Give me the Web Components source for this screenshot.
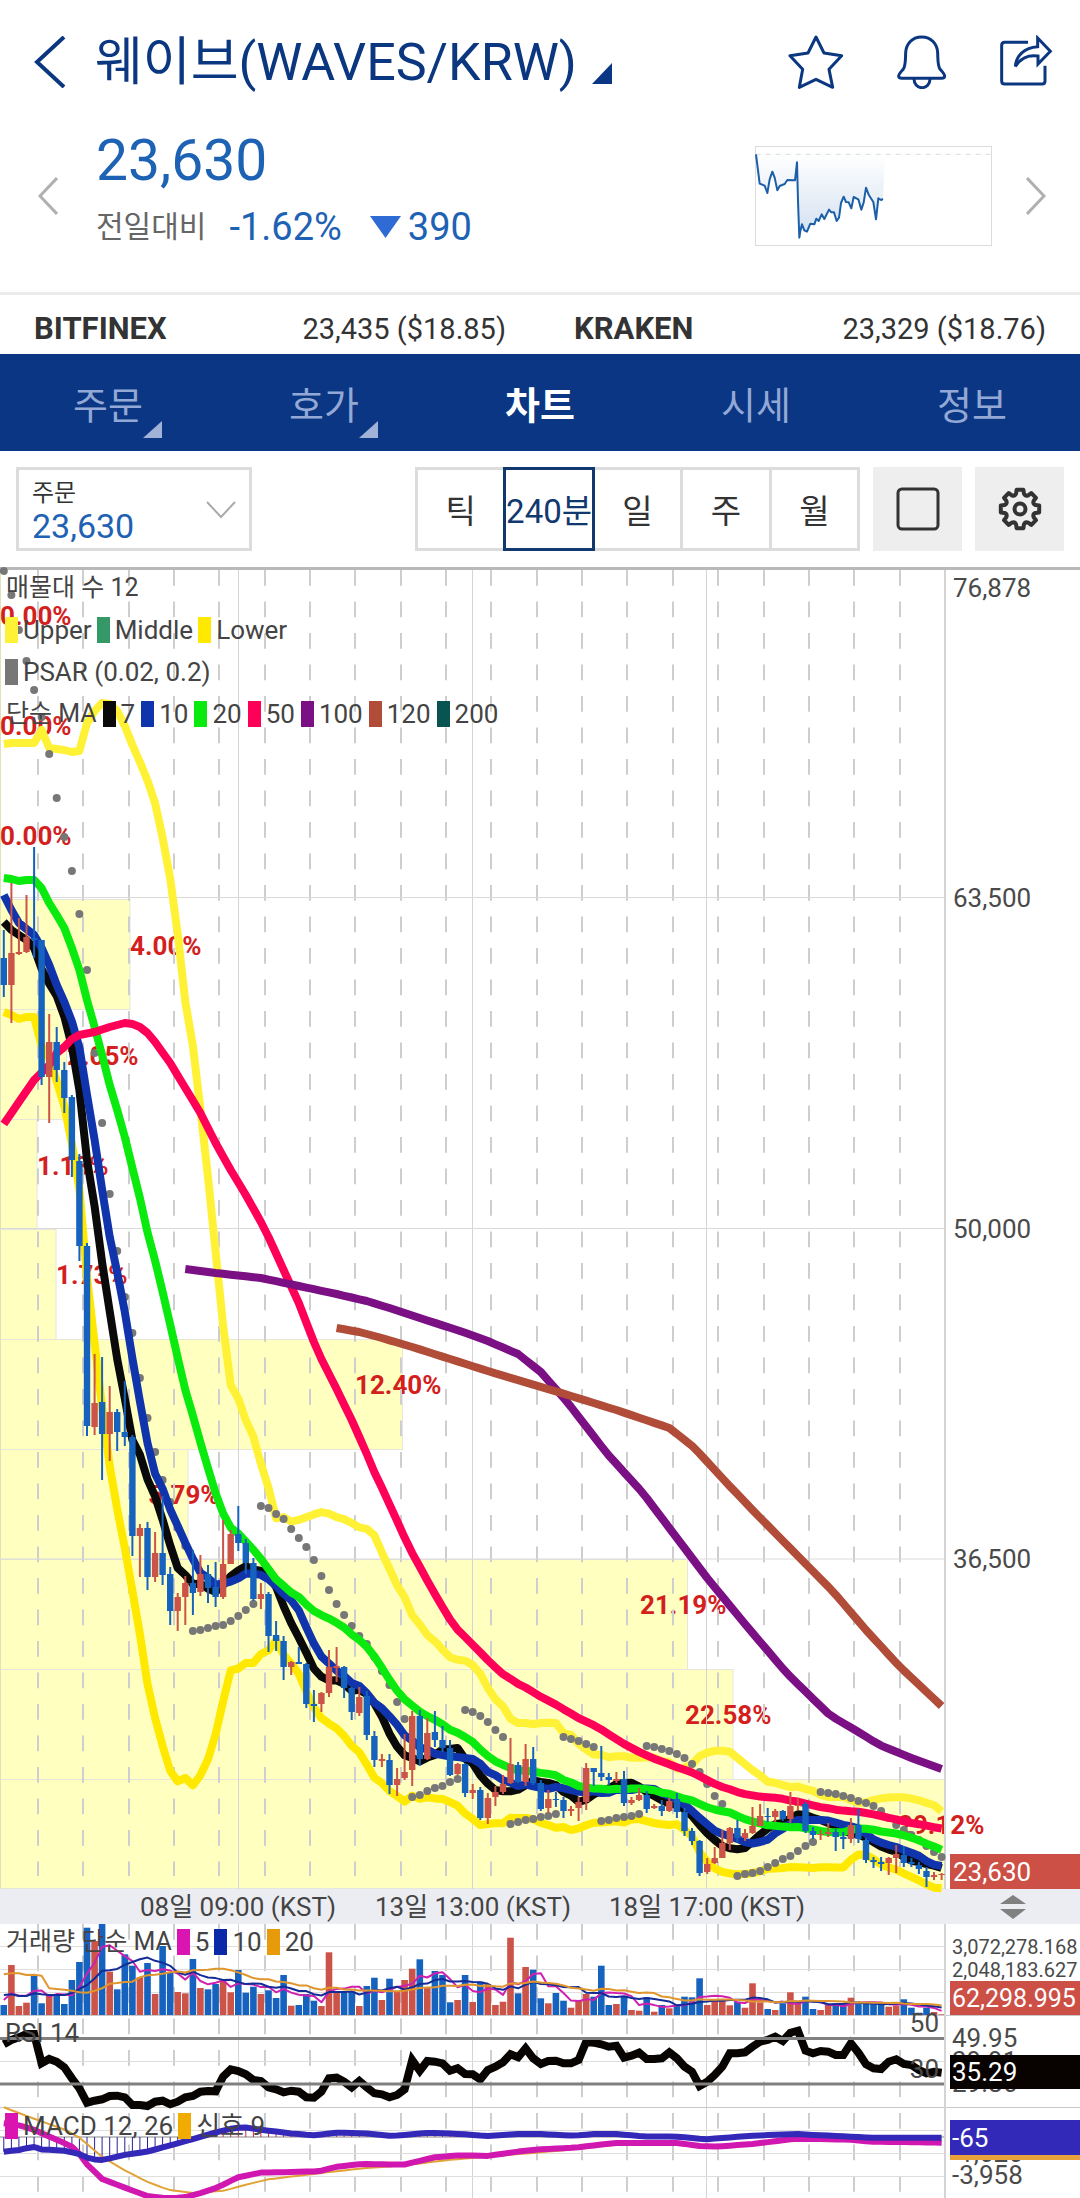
<!DOCTYPE html>
<html lang="ko">
<head>
<meta charset="utf-8">
<meta name="viewport" content="width=device-width, initial-scale=1">
<title>웨이브(WAVES/KRW)</title>
<style>
html, body { margin: 0; padding: 0; background: #fff; }
body { font-family: Roboto, "Noto Sans CJK KR", sans-serif; color: #333; overflow-x: hidden; }
</style>
</head>
<body>
<trade-screen></trade-screen>
<script>
const RESET = `
  *, *::before, *::after { box-sizing: border-box; }
  button { font: inherit; color: inherit; background: none; border: 0; padding: 0; margin: 0; cursor: pointer; }
  svg { display: block; }
`;

function define(name, css, html, setup) {
  const template = document.createElement('template');
  template.innerHTML = `<style>${RESET}${css}</style>${html}`;
  customElements.define(name, class extends HTMLElement {
    constructor() {
      super();
      this.attachShadow({ mode: 'open' }).append(template.content.cloneNode(true));
      if (setup) setup(this.shadowRoot, this);
    }
  });
}

/* ---------- header ---------- */
define('app-header', `
  :host { display: block; color: #0b3780; }
  header { display: flex; align-items: center; height: 123px; padding: 0 27px 0 34px; }
  .back { width: 32px; margin-right: 29px; }
  h1 { font-size: 52px; line-height: 64px; font-weight: 400; margin: 0; white-space: nowrap; }
  .market { display: flex; align-items: center; gap: 15px; padding-top: 2px; }
  .corner { margin-top: 22px; }
  .tools { display: flex; gap: 51px; margin-left: auto; }
`, `
  <header>
    <button class="back" aria-label="뒤로"><svg width="32" height="52" viewBox="0 0 32 52" fill="none" stroke="currentColor" stroke-width="4"><path d="M30 1L3 26l27 25"/></svg></button>
    <button class="market"><h1>웨이브(WAVES/KRW)</h1>
      <svg class="corner" width="20" height="21" viewBox="0 0 20 21" fill="#0a3684"><path d="M20 0v21H0z"/></svg></button>
    <div class="tools">
      <button aria-label="즐겨찾기"><svg width="58" height="54" viewBox="203 103 174 162" fill="none" stroke="currentColor" stroke-width="9" stroke-linejoin="round"><path d="M290 109l24 48 53 8-38 41 11 54-50-24-50 24 10-54-38-41 54-8z"/></svg></button>
      <button aria-label="알림"><svg width="52" height="54" viewBox="527 103 156 162" fill="none" stroke="currentColor" stroke-width="9" stroke-linejoin="round"><path d="M604 109c-30 0-47 22-48 47-1 28 0 40-7 49-9 11-15 16-14 22q1 6 9 6h120q8 0 9-6c1-6-5-11-14-22-7-9-6-21-7-49-1-25-18-47-48-47z"/><path d="M581 235a23 25 0 0 0 48 0"/></svg></button>
      <button aria-label="공유"><svg width="54" height="54" viewBox="840 103 162 162" fill="none" stroke="currentColor" stroke-width="9"><path d="M927 125H857q-9 0-9 9V241q0 9 9 9H969q9 0 9-9V195"/><path d="M956 112l38 40-37 38v-24c-32-5-52 6-68 31 3-32 26-56 67-59z"/></svg></button>
    </div>
  </header>
`);

/* ---------- price summary ---------- */
define('price-summary', `
  :host { display: block; color: #1e62b4; }
  section { display: flex; align-items: center; height: 169px; padding: 0 34px 24px 38px; }
  .prev { margin-right: 38px; }
  .next { margin-left: 34px; }
  .info { padding-bottom: 12px; margin-right: auto; }
  .price { font-size: 57px; line-height: 64px; }
  .change { display: flex; align-items: center; margin-top: 10px; font-size: 38px; line-height: 48px; }
  .label { font-size: 30px; color: #666; margin-right: 23px; }
  .down { margin: 0 7px 0 28px; }
`, `
  <section>
    <button class="prev" aria-label="이전"><svg width="20" height="38" viewBox="0 0 20 38" fill="none" stroke="#b0b0b0" stroke-width="3"><path d="M19 1L2 19l17 18"/></svg></button>
    <div class="info">
      <div class="price">23,630</div>
      <div class="change"><span class="label">전일대비</span><span>-1.62%</span>
        <svg class="down" width="31" height="22" viewBox="0 0 31 22" fill="#2f6bd4"><path d="M0 0h31L15.500 22z"/></svg><span>390</span></div>
    </div>
    <svg width="237" height="100" viewBox="108 435 711 300" fill="none">
      <defs><linearGradient id="fade" x1="0" y1="0" x2="0" y2="1"><stop offset="0" stop-color="#1e62b4" stop-opacity="0"/><stop offset="1" stop-color="#1e62b4" stop-opacity=".2"/></linearGradient></defs>
      <rect x="109.500" y="436.500" width="708" height="297" stroke="#dcdcdc" stroke-width="3"/>
      <path d="M110 460H818" stroke="#dcdcdc" stroke-width="3" stroke-dasharray="15 15"/>
      <path id="area" fill="url(#fade)"/>
      <path id="line" stroke="#1c5fa8" stroke-width="6" stroke-linejoin="round"/>
    </svg>
    <button class="next" aria-label="다음"><svg width="20" height="38" viewBox="0 0 20 38" fill="none" stroke="#b0b0b0" stroke-width="3"><path d="M1 1l17 18L1 37"/></svg></button>
  </section>
`, root => {
  const d = '111,460 116,500 122,548 137,554 145,576 152,535 160,512 167,530 175,568 182,555 197,549 205,537 228,538 234,484 237,600 241,710 244,690 249,670 256,688 264,692 274,668 286,670 292,653 299,660 308,640 316,654 330,626 337,634 345,634 353,660 360,650 366,606 374,587 381,603 389,604 397,622 404,588 418,595 427,626 434,605 441,560 449,581 463,603 471,655 478,592 486,597 492,594'.replace(/ /g, 'L');
  root.getElementById('line').setAttribute('d', 'M' + d);
  root.getElementById('area').setAttribute('d', 'M' + d + 'L498,460L111,460Z');
});

/* ---------- other exchanges ---------- */
define('exchange-rate', `
  :host { display: flex; flex: 1; align-items: baseline; justify-content: space-between; padding: 0 34px; }
  b { font-weight: 700; font-size: 31px; }
`, `<b><slot name="name"></slot></b><span><slot></slot></span>`);

define('exchange-strip', `
  :host { display: flex; border-top: 3px solid #ebebeb; height: 62px; padding-top: 8px; align-items: center; font-size: 29px; color: #333; }
`, `
  <exchange-rate><span slot="name">BITFINEX</span>23,435 ($18.85)</exchange-rate>
  <exchange-rate><span slot="name">KRAKEN</span>23,329 ($18.76)</exchange-rate>
`);

/* ---------- tabs ---------- */
define('tab-bar', `
  :host { display: block; background: #0a3684; }
  nav { display: flex; height: 97px; }
  a { position: relative; flex: 1; display: flex; align-items: center; justify-content: center; font-size: 38px; color: #93a8d5; text-decoration: none; }
  a[aria-current] { color: #fff; font-weight: 700; }
  a.more::after { content: ""; position: absolute; right: 25%; bottom: 13px; width: 19px; height: 17px; background: #a0b2d8; clip-path: polygon(100% 0, 100% 100%, 0 100%); }
`, `
  <nav><a class="more" href="#order">주문</a><a class="more" href="#book">호가</a><a href="#chart" aria-current="page">차트</a><a href="#quote">시세</a><a href="#info">정보</a></nav>
`);

/* ---------- toolbar ---------- */
define('chart-toolbar', `
  :host { display: block; border-bottom: 3px solid #b9b9b9; }
  .bar { display: flex; padding: 16px; gap: 13px; }
  .order { display: flex; flex-direction: column; justify-content: center; position: relative; width: 236px; height: 84px; border: 3px solid #dcdcdc; padding: 4px 13px 0; }
  .order label { font-size: 24px; line-height: 30px; color: #333; }
  .order select { appearance: none; border: 0; background: none; padding: 0; margin: 0; font: inherit; font-size: 34px; line-height: 36px; height: 36px; color: #1e62b4; outline: 0; }
  .order svg { position: absolute; right: 13px; top: 31px; pointer-events: none; }
  .unit { display: flex; width: 445px; height: 84px; margin-left: auto; }
  .unit button { flex: 1 1 0; min-width: 0; border: 3px solid #dcdcdc; margin-left: -3px; font-size: 33px; color: #333; white-space: nowrap; display: flex; align-items: center; justify-content: center; }
  .unit button:first-child { margin-left: 0; }
  .unit button[aria-pressed] { position: relative; border-color: #12396f; color: #12396f; }
  .tool { width: 89px; height: 84px; background: #eee; display: grid; place-items: center; }
`, `
  <div class="bar">
    <div class="order"><label for="price">주문</label><select id="price"><option>23,630</option></select>
      <svg width="30" height="18" viewBox="0 0 30 18" fill="none" stroke="#aaa" stroke-width="2"><path d="M1 1l14 15L29 1"/></svg></div>
    <div class="unit"><button>틱</button><button aria-pressed="true">240분</button><button>일</button><button>주</button><button>월</button></div>
    <button class="tool" aria-label="전체화면"><svg width="44" height="44" fill="none" stroke="#333" stroke-width="3"><rect x="2" y="2" width="40" height="40" rx="4"/></svg></button>
    <button class="tool" aria-label="설정"><svg width="44" height="44" viewBox="-22 -22 44 44" fill="none" stroke="#333" stroke-width="4" stroke-linejoin="round"><path id="gear"/><circle r="5.500"/></svg></button>
  </div>
`, root => {
  const p = (r, deg) => { const a = deg * Math.PI / 180; return `${(r * Math.cos(a)).toFixed(1)} ${(r * Math.sin(a)).toFixed(1)}`; };
  let d = '';
  for (let k = 0; k < 8; k++) {
    const a = k * 45;
    d += `${k ? 'L' : 'M'}${p(16, a - 14)}L${p(19.5, a - 10)}L${p(19.5, a + 10)}L${p(16, a + 14)}Q${p(13.5, a + 22.5)} ${p(16, a + 31)}`;
  }
  root.getElementById('gear').setAttribute('d', d + 'Z');
});

/* ---------- legends ---------- */
define('legend-key', `
  :host { display: flex; align-items: center; gap: 5px; }
  i { width: 13px; height: 26px; background: var(--key); }
`, `<i></i><span><slot></slot></span>`);

define('chart-legend', `
  :host { display: flex; align-items: center; gap: 5px; height: 42px; padding-left: 5px; font-size: 26px; line-height: 42px; color: #444; white-space: nowrap; }
  :host(.averages) { gap: 6px; }
  ::slotted(small) { font-size: 25px; padding-left: 1px; }
`, `<slot></slot>`);

/* ---------- chart data ---------- */
const STEP = 7.563, X0 = 3.8, RED = '#cc5348', BLUE = '#1662bf';
const px = i => X0 + STEP * i;

// Each bar: direction (r = up, b = down), high, low, body top, body bottom.
const BARS = `b930,997,958,985 r883,1023,953,985 r918,955,952,954 r895,953,937,952 b847,958,938,940 b940,1085,940,1077 r1014,1123,1042,1077 b1027,1082,1042,1070 b1062,1113,1070,1098 b1095,1177,1097,1160 b1154,1261,1161,1246 b1243,1436,1246,1426 r1354,1435,1403,1427 b1357,1480,1402,1434 r1386,1461,1412,1434 b1409,1451,1412,1432 b1381,1446,1432,1437 b1435,1556,1437,1536 r1524,1577,1528,1536 b1522,1590,1528,1577 r1532,1582,1553,1577 b1496,1585,1553,1575 b1567,1625,1574,1611 r1593,1631,1597,1611 r1576,1625,1583,1597 b1550,1615,1583,1593 r1555,1596,1574,1592 b1565,1603,1574,1588 b1562,1607,1587,1597 r1520,1599,1564,1597 r1530,1564,1534,1564 b1506,1551,1534,1543 b1539,1574,1543,1563 b1558,1601,1563,1599 r1583,1609,1594,1599 b1592,1652,1594,1636 b1621,1651,1635,1641 b1636,1680,1641,1667 r1661,1675,1662,1667 b1647,1664,1662,1664 b1663,1708,1664,1704 b1690,1722,1704,1706 r1692,1712,1693,1704 r1650,1697,1667,1693 r1647,1682,1666,1668 b1666,1698,1667,1688 b1687,1720,1688,1712 r1687,1716,1697,1713 b1691,1740,1696,1735 b1731,1767,1736,1760 r1754,1767,1759,1761 b1754,1794,1760,1785 r1768,1796,1779,1785 r1734,1780,1772,1778 r1711,1786,1716,1770 b1710,1766,1716,1759 r1718,1760,1733,1759 b1711,1747,1732,1740 b1726,1752,1740,1748 b1740,1776,1748,1775 r1763,1775,1764,1774 b1763,1797,1764,1793 r1784,1799,1790,1793 b1787,1820,1790,1818 r1793,1824,1798,1818 r1786,1806,1792,1797 r1775,1794,1784,1792 r1738,1784,1764,1783 b1762,1783,1765,1782 r1744,1786,1759,1782 b1747,1785,1759,1783 b1780,1811,1783,1809 r1790,1813,1799,1808 b1792,1807,1799,1800 b1797,1818,1800,1811 r1806,1816,1809,1811 r1797,1821,1802,1808 r1763,1810,1768,1802 b1768,1786,1768,1772 b1746,1781,1773,1777 b1773,1785,1777,1780 r1772,1783,1779,1781 b1771,1806,1779,1803 r1797,1805,1800,1803 r1788,1801,1795,1800 b1791,1813,1795,1809 r1804,1809,1806,1808 b1800,1816,1806,1811 r1798,1812,1801,1811 b1793,1818,1799,1812 b1808,1836,1812,1831 b1828,1845,1831,1841 b1840,1876,1841,1873 r1858,1874,1864,1872 r1847,1864,1858,1863 r1830,1858,1843,1858 r1827,1850,1828,1843 b1820,1842,1828,1838 r1829,1841,1833,1838 r1807,1834,1826,1833 r1804,1826,1816,1826 b1808,1822,1816,1817 r1809,1822,1811,1817 b1810,1821,1811,1819 r1792,1823,1806,1819 r1798,1810,1805,1806 b1802,1833,1804,1831 b1827,1839,1831,1835 r1830,1840,1834,1835 r1823,1837,1832,1834 b1829,1851,1832,1837 b1832,1849,1837,1839 r1818,1843,1825,1839 b1809,1843,1825,1839 b1838,1863,1840,1860 b1857,1868,1860,1862 b1857,1871,1862,1864 r1857,1875,1858,1863 r1845,1873,1854,1858 b1846,1867,1855,1863 b1858,1867,1862,1864 b1862,1874,1865,1869 b1867,1887,1871,1877 r1872,1880,1875,1877 r1873,1880,1874,1875`
  .split(' ').map(s => {
    const [hi, lo, top, bottom] = s.slice(1).split(',').map(Number);
    const up = s[0] === 'r';
    return { up, hi, lo, top, bottom, close: up ? top : bottom };
  });
const CLOSES = BARS.map(b => b.close);

const SAR = `571 595 630 661 690 717 754 798 837 871 914 970 1053 1123 1194 1251 1297 1333 1378 1418 1452 1480 1502 1528 1546 1631 1630 1628 1626 1625 1621 1616 1610 1604 1506 1508 1514 1519 1529 1538 1547 1560 1576 1590 1604 1615 1626 1636 1644 1657 1671 1685 1702 1719 1797 1795 1791 1788 1786 1782 1779 1710 1712 1716 1722 1730 1737 1824 1822 1820 1819 1817 1816 1814 1737 1739 1741 1744 1747 1821 1820 1818 1817 1816 1814 1746 1747 1749 1751 1754 1758 1764 1772 1784 1796 1804 0 1876 1874 1873 1871 1867 1863 1859 1856 1851 1846 1842 1792 1793 1794 1796 1798 1801 1803 1806 1811 1818 1825 1830 1835 1840 1846 1852 1857`.split(' ').map(Number);

// Volume bar tops, in thirds of a unit below the 1860 line.
const VOLUME = `435 315 438 428 346 430 405 403 432 360 306 203 243 192 335 388 283 317 352 309 402 258 338 396 400 297 384 388 372 362 397 330 398 380 402 391 414 345 437 435 402 422 438 277 395 397 395 438 378 353 420 356 396 360 326 298 383 333 345 427 420 345 426 365 372 435 425 233 400 321 329 415 430 399 422 443 422 402 410 317 435 432 408 450 452 412 455 435 445 435 410 412 355 435 423 418 436 425 443 370 427 447 450 430 397 432 410 447 450 435 430 432 413 430 428 432 433 440 437 418 443 458 443 456 463`.split(' ').map(v => 1860 + v / 3);

const RSI = `553 540 532 522 522 610 597 605 622 655 685 728 722 718 708 707 712 735 735 738 725 722 733 725 712 708 695 693 694 650 628 633 643 660 663 682 688 697 692 695 712 713 695 655 653 665 682 663 682 700 703 712 705 688 600 632 603 605 610 632 625 642 643 658 630 620 607 583 592 565 595 612 603 602 610 610 600 545 548 553 560 557 593 587 578 597 597 595 577 595 620 635 678 665 645 620 580 580 577 560 545 540 530 543 518 512 572 580 573 575 585 585 550 578 613 625 627 605 598 612 615 630 640 635 638`.split(' ').map(v => 1860 + v / 3);

/* ---------- chart helpers ---------- */
const mean = a => a.reduce((s, v) => s + v, 0) / a.length;
function movingAverage(values, n, head) {
  return values.map((_, i) => i >= n - 1 ? mean(values.slice(i - n + 1, i + 1)) : head[i]);
}
// Fills in every bar between [bar, value] anchors.
function interpolate(anchors) {
  const out = [];
  for (let k = 0; k < anchors.length - 1; k++) {
    const [a, ya] = anchors[k], [b, yb] = anchors[k + 1];
    for (let i = Math.ceil(a); i < b; i++) out[i] = ya + (yb - ya) * (i - a) / (b - a);
  }
  const last = anchors[anchors.length - 1];
  out[Math.round(last[0])] = last[1];
  return out;
}
const pairs = s => s.split(' ').map(p => p.split(':').map(Number));
function line(values, color, width) {
  const pts = [];
  values.forEach((v, i) => { if (v) pts.push(`${px(i).toFixed(1)},${v.toFixed(1)}`); });
  return `<polyline points="${pts.join(' ')}" fill="none" stroke="${color}" stroke-width="${width}" stroke-linejoin="round"/>`;
}
function verticals(y1, y2) {
  let s = '';
  for (let i = 0; i < 20; i++) {
    const x = Math.round(37.8 + 45.36 * i);
    s += `<path d="M${x} ${y1}V${y2}" stroke="#cecece" stroke-width="2" stroke-dasharray="15.75 15.75"/>`;
  }
  return s;
}
const solid = (xs, y1, y2) => xs.map(x => `<path d="M${x} ${y1}V${y2}" stroke="#d4d4d4" stroke-width="1"/>`).join('');
const TIMES = [238.5, 472.5, 706.5];

/* ---------- price chart ---------- */
define('price-chart', `
  :host { display: block; position: relative; font-size: 26px; }
  svg { width: 100%; height: auto; overflow: visible; }
  .legends { position: absolute; left: 0; top: -3px; }
`, `
  <svg id="plot" viewBox="0 570 1080 1319" font-size="26"></svg>
  <div class="legends">
    <chart-legend><small>매물대 수 12</small></chart-legend>
    <chart-legend><legend-key style="--key:#fff236">Upper</legend-key><legend-key style="--key:#349867">Middle</legend-key><legend-key style="--key:#ffe900">Lower</legend-key></chart-legend>
    <chart-legend><legend-key style="--key:#777">PSAR (0.02, 0.2)</legend-key></chart-legend>
    <chart-legend class="averages"><small>단순 MA</small><legend-key style="--key:#0a0a0a">7</legend-key><legend-key style="--key:#1034ab">10</legend-key><legend-key style="--key:#0bea0f">20</legend-key><legend-key style="--key:#ff0058">50</legend-key><legend-key style="--key:#7b1084">100</legend-key><legend-key style="--key:#b04c38">120</legend-key><legend-key style="--key:#075450">200</legend-key></chart-legend>
  </div>
`, root => {
  const profile = [[0, '0.00%', 0], [0, '0.00%', 0], [0, '0.00%', 0], [129.5, '4.00%', 130], [66, '2.05%', 67], [36.5, '1.13%', 37], [55.5, '1.73%', 56], [402, '12.40%', 355], [187.5, '5.79%', 148], [687, '21.19%', 640], [732.5, '22.58%', 685], [944.5, '29.12%', 898]];
  let s = '';
  profile.forEach(([w], k) => { if (w) s += `<rect x=".5" y="${569 + 110 * k + .5}" width="${w}" height="${k === 11 ? 109 : 110}" fill="#ffffc0" stroke="#e6e6dc"/>`; });
  s += '<path d="M.5 570V1889" stroke="#e2e2b8"/>';
  profile.forEach(([, t, x], k) => { s += `<text x="${x}" y="${Math.round(625 + 109.9 * k)}" font-weight="700" fill="#d4201c">${t}</text>`; });
  s += verticals(570, 1876) + solid(TIMES, 570, 1889);
  [897.5, 1228.5, 1559].forEach(y => { s += `<path d="M0 ${y}H945" stroke="#dadada"/>`; });
  s += '<path d="M945 570V1889" stroke="#d4d4d4" stroke-width="2"/>';

  const ma7 = movingAverage(CLOSES, 7, [922, 930, 935, 940, 948, 969]);
  const ma10 = movingAverage(CLOSES, 10, [895, 910, 923, 929, 935, 948, 965, 985, 1002]);
  const ma20 = movingAverage(CLOSES, 20, [878, 879, 881, 880, 880, 888, 903, 915, 928, 948, 970, 1000, 1027, 1055, 1085, 1110, 1137, 1168, 1198]);
  const ma50 = movingAverage(CLOSES, 50, interpolate(pairs('0:1124 2:1102 4:1080 6:1065 7:1053 8:1047 9:1039 10:1035 12:1032 14:1027 16:1023 17:1024 18:1027 19:1033 20:1042 22:1063 24:1088 26:1113 28:1143 30:1170 32:1195 34:1222 35:1237 37:1270 39:1303 41:1342 42:1359 44:1389 46:1420 48:1454 49:1471')));
  const ma100 = interpolate(pairs('24:1269 28:1273 34:1278 39:1286 44:1294 48:1301 51:1308 55:1318 60.7:1332 64:1341 68:1354 71:1372 74.6:1403 79.7:1453 84.5:1493 88.5:1533 93:1578 98:1624 103.5:1673 109.2:1715 113:1732 115.8:1745 120:1758 124:1769'));
  const ma120 = interpolate(pairs('44:1328 47:1332 50:1338 54:1347 64.4:1372 73.7:1393 81:1410 88:1428 91.2:1447 95.6:1483 99:1510 105:1556 109.7:1592 114:1630 118.5:1667 124:1706'));
  const head = [744, 743, 743, 743, 743, 730, 748, 749, 750, 752, 751, 723, 711, 703, 704, 711, 726, 745, 762];
  const upper = ma20.map((m, i) => i < 19 ? head[i] : m - 2 * Math.sqrt(mean(CLOSES.slice(i - 19, i + 1).map(c => (c - m) ** 2))));
  const lower = ma20.map((m, i) => 2 * m - upper[i]);

  s += line(upper, '#fff236', 8) + line(lower, '#ffe900', 8);
  SAR.forEach((y, i) => { if (y) s += `<circle cx="${px(i).toFixed(1)}" cy="${y}" r="4" fill="#777"/>`; });
  s += line(ma7, '#0a0a0a', 8) + line(ma10, '#1034ab', 8) + line(ma20, '#0bea0f', 8) + line(ma50, '#ff0058', 8) + line(ma100, '#7b1084', 8) + line(ma120, '#b04c38', 8);
  BARS.forEach((b, i) => {
    const x = px(i), c = b.up ? RED : BLUE;
    s += `<path d="M${x.toFixed(1)} ${b.hi}V${b.lo}" stroke="${c}" stroke-width="2"/><rect x="${(x - 3.2).toFixed(1)}" y="${b.top}" width="6.4" height="${b.bottom - b.top}" fill="${c}"/>`;
  });

  s += '<g fill="#4a4a4a"><text x="953" y="597">76,878</text><text x="953" y="907">63,500</text><text x="953" y="1238">50,000</text><text x="953" y="1568">36,500</text></g>';
  s += '<rect x="950" y="1854" width="130" height="35" fill="#cd5046"/><text x="953" y="1881" fill="#fff">23,630</text>';
  root.getElementById('plot').innerHTML = s;
});

/* ---------- time axis ---------- */
define('time-axis', `
  :host { display: block; background: #ecedf2; }
  svg { width: 100%; height: auto; }
`, `
  <svg viewBox="0 1889 1080 35" font-size="26" fill="#444" text-anchor="middle">
    <text x="238" y="1916">08일 09:00 (KST)</text><text x="473" y="1916">13일 13:00 (KST)</text><text x="707" y="1916">18일 17:00 (KST)</text>
    <path d="M1000 1904l13-9 13 9zM1000 1909h26l-13 10z" fill="#808080"/>
  </svg>
`);

/* ---------- volume, RSI and MACD ---------- */
define('indicator-chart', `
  :host { display: block; position: relative; overflow: hidden; }
  svg { width: 100%; height: auto; }
  chart-legend { position: absolute; left: 0; }
  .volume { top: -1%; }
  .rsi { top: 32%; }
  .macd { top: 66%; }
`, `
  <svg id="plot" viewBox="0 1924 1080 274" font-size="26"></svg>
  <chart-legend class="volume"><small>거래량 단순 MA</small><legend-key style="--key:#da14b0">5</legend-key><legend-key style="--key:#0a28a8">10</legend-key><legend-key style="--key:#e89b0a">20</legend-key></chart-legend>
  <chart-legend class="rsi">RSI 14</chart-legend>
  <chart-legend class="macd"><legend-key style="--key:#da14b0">MACD 12, 26</legend-key><legend-key style="--key:#f0ac00">신호 9</legend-key></chart-legend>
`, root => {
  const third = list => list.map(v => 1860 + v / 3);
  // Anchors given in plot pixels are turned into bar positions.
  const trace = text => interpolate(pairs(text).map(([x, y]) => [(x - X0) / STEP, 1860 + y / 3]).map(([i, y]) => [i < .2 ? 0 : i, y]));

  let s = verticals(1924, 2198) + solid(TIMES, 1924, 2198);
  [1946.5, 1969.5, 1992.5, 2061.5, 2130.5, 2153.5, 2176.5].forEach(y => { s += `<path d="M0 ${y}H945" stroke="#dedede"/>`; });
  s += '<path d="M0 2015.5H1080M0 2107.500H1080" stroke="#c8c8c8"/><path d="M0 2137H945" stroke="#c4c4c4" stroke-width="2"/>';

  VOLUME.forEach((y, i) => {
    s += `<rect x="${(px(i) - 3.3).toFixed(1)}" y="${y.toFixed(1)}" width="6.6" height="${(2015 - y).toFixed(1)}" fill="${BARS[i].up ? RED : BLUE}"/>`;
  });
  s += line(movingAverage(VOLUME, 5, third([420, 400, 407, 407])), '#d020b0', 2);
  s += line(movingAverage(VOLUME, 10, third([405, 403, 408, 408, 400, 403, 405, 405, 405])), '#142c98', 2);
  s += line(movingAverage(VOLUME, 20, third([343, 340, 340, 345, 344, 347, 385, 387, 389, 392, 397, 398, 392, 385, 371, 369, 366, 365, 352])), '#e0962c', 2);

  s += line(RSI, '#080402', 8).replace('round', 'miter');
  s += '<path d="M0 2038.500H945M0 2084H945" stroke="#808080" stroke-width="3"/>';

  const hist = trace('3.8:875 19:870 33:860 41:868 64:872 79:882 90:897 103:900 124:885 147:875 169:857 192:838 215:818 234:804 245:802 262:810 291:820 313:826 337:818 365:820 393:828 412:823 430:818 461:822 487:828 517:822 540:822 574:827 595:822 616:822 643:829 678:830 705:838 747:828 795:822 836:828 871:833 941.6:833');
  const macd = trace('3.8:790 21:797 33:808 48:828 71:858 79:880 86:910 102:957 124:982 147:1008 165:1014 183:1013 200:1000 217:983 238:952 260:938 291:936 319:934 337:920 362:912 404:914 434:892 461:886 487:888 517:875 540:868 574:863 616:849 678:849 699:858 716:860 753:852 795:836 850:839 871:845 941.6:848');
  const signal = trace('3.8:742 33:775 64:808 79:832 102:890 124:930 147:965 169:990 193:999 224:992 245:975 268:958 313:942 362:925 404:916 448:900 499:887 540:877 574:868 616:854 678:851 699:857 720:859 753:856 795:841 850:840 871:843 941.6:847');
  hist.forEach((y, i) => {
    if (Math.abs(y - 2137) > 1) s += `<path d="M${px(i).toFixed(1)} 2137V${y.toFixed(1)}" stroke="${y > 2137 ? '#2a1f9c' : '#d0284a'}"/>`;
  });
  s += line(signal, '#e2a336', 2) + line(macd, '#d018b0', 6) + line(hist, '#3428b8', 6);

  s += '<path d="M945 1924V2198" stroke="#d4d4d4" stroke-width="2"/><g fill="#4a4a4a">';
  s += '<text x="939" y="2032" text-anchor="end">50</text><text x="939" y="2078" text-anchor="end">30</text>';
  s += '<text x="952" y="1954" font-size="20">3,072,278.168</text><text x="952" y="1977" font-size="20">2,048,183.627</text>';
  s += '<text x="952" y="2047">49.95</text><text x="952" y="2070">39.91</text><text x="952" y="2092">29.86</text>';
  s += '<text x="952" y="2162">-1,626</text><text x="952" y="2184">-3,958</text></g>';
  s += '<rect x="950" y="1981" width="130" height="34" fill="#cd5046"/><text x="952" y="2007" font-size="25" fill="#fff">62,298.995</text>';
  s += '<rect x="950" y="2055" width="130" height="34" fill="#080300"/><text x="952" y="2081" fill="#fff">35.29</text>';
  s += '<rect x="950" y="2125" width="130" height="35" fill="#e9a13b"/><rect x="950" y="2120" width="130" height="35" fill="#3329b9"/><text x="952" y="2147" fill="#fff">-65</text>';
  root.getElementById('plot').innerHTML = s;
});

/* ---------- screen ---------- */
define('trade-screen', `
  :host { display: flex; flex-direction: column; background: #fff; }
`, `
  <app-header></app-header>
  <price-summary></price-summary>
  <exchange-strip></exchange-strip>
  <tab-bar></tab-bar>
  <chart-toolbar></chart-toolbar>
  <price-chart></price-chart>
  <time-axis></time-axis>
  <indicator-chart></indicator-chart>
`);
</script>
</body>
</html>
